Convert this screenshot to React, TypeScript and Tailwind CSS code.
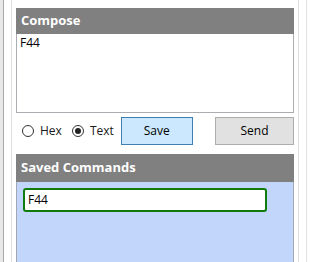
export default function App() {
    return (
        <div className="w-[318px] h-[262px] bg-white flex overflow-hidden font-['Open_Sans','Noto_Sans',sans-serif]">
            <div className="w-[4px] h-full bg-[#e8e8e8] border-r border-[#a8a8a8]" />
            <div className="ml-[7px] h-full border-l border-r border-[#dedede] px-[4px] pt-[8px] w-[288px] flex flex-col">
                <div className="h-[26px] bg-[#808080] flex items-center px-[5px] text-white font-bold text-[13px]">
                    Compose
                </div>
                <div className="h-[79px] border border-[#abadb3] border-t-0 bg-white px-[3px] pt-[1px] text-[12px] text-black leading-[15px]">
                    F44
                </div>
                <div className="mt-[4px] h-[28px] flex items-center text-[12px] text-[#1a1a1a]">
                    <label className="flex items-center ml-[6px] gap-[6px]">
                        <span className="w-[12px] h-[12px] rounded-full border border-[#333] bg-white" />
                        <span>Hex</span>
                    </label>
                    <label className="flex items-center ml-[10px] gap-[6px]">
                        <span className="w-[12px] h-[12px] rounded-full border border-[#333] bg-white flex items-center justify-center">
                            <span className="w-[6px] h-[6px] rounded-full bg-[#222]" />
                        </span>
                        <span>Text</span>
                    </label>
                    <button className="ml-[7px] w-[72px] h-[28px] bg-[#cce8ff] border border-[#3f7fb0] text-[12px] text-black">
                        Save
                    </button>
                    <button className="ml-auto w-[79px] h-[28px] bg-[#e1e1e1] border border-[#adadad] text-[12px] text-black">
                        Send
                    </button>
                </div>
                <div className="mt-[9px] h-[28px] bg-[#808080] flex items-center px-[5px] text-white font-bold text-[13px]">
                    Saved Commands
                </div>
                <div className="flex-1 bg-[#c2d6fc] border-l border-r border-[#a0a8b8] pt-[6px] pl-[6px]">
                    <div className="w-[244px] h-[24px] bg-white border-2 border-[#107c10] rounded-[3px] flex items-center px-[3px] text-[12px] text-black">
                        F44
                    </div>
                </div>
            </div>
            <div className="ml-[7px] h-full border-l border-[#e2e2e2]" />
        </div>
    )
}
